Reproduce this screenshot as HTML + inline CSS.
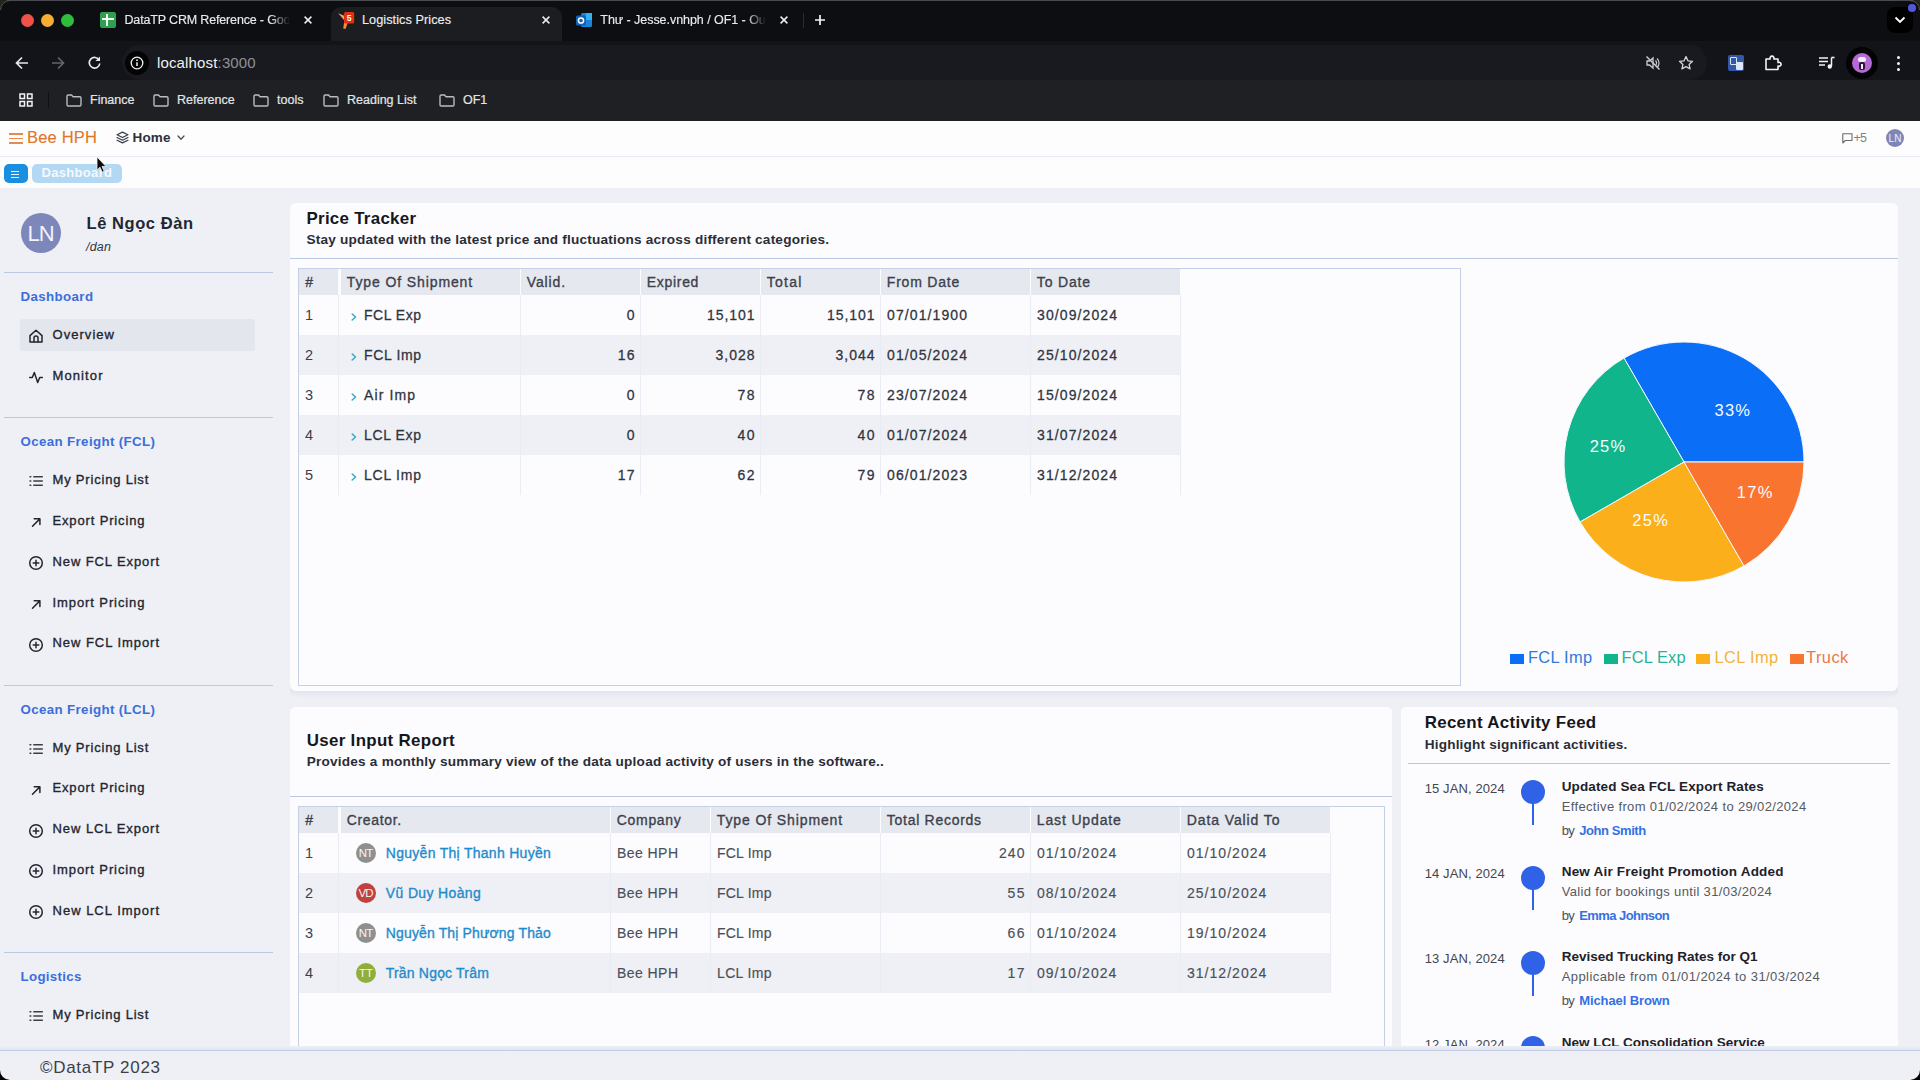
<!DOCTYPE html>
<html lang="en">
<head>
<meta charset="utf-8">
<title>Logistics Prices</title>
<style>
*{box-sizing:border-box;margin:0;padding:0}
html,body{width:1920px;height:1080px;overflow:hidden;background:#eef0f6;font-family:"Liberation Sans",sans-serif;color:#2b2f3a}
.a{position:absolute}
.t{position:absolute;white-space:nowrap;line-height:1}
.b{font-weight:700}
svg{position:absolute;overflow:visible}
/* chrome */
#tabstrip{left:0;top:0;width:1920px;height:41px;background:#0d0e12}
#toolbar{left:0;top:41px;width:1920px;height:40px;background:#131419}
#omni{left:122px;top:45px;width:1585px;height:35px;border-radius:18px;background:#191a1f}
#bmbar{left:0;top:80px;width:1920px;height:41px;background:#1f2023}
#acttab{left:331px;top:7px;width:231px;height:34px;border-radius:10px 10px 0 0;background:#1c1d20}
.ct{color:#e8eaed;font-size:13px;-webkit-text-stroke:.2px currentColor}
.bm{color:#e3e5e8;font-size:12.5px;top:94px;-webkit-text-stroke:.2px currentColor}
/* app */
#apphdr{left:0;top:121px;width:1920px;height:67px;background:#fdfdfe}
#hdrline{left:0;top:156px;width:1920px;height:1px;background:#e9ebf5}
.panel{background:#fcfcfe;border-radius:6px}
.hline{height:1px;background:#bcc9e2}
.sec{color:#3b6fd9;font-weight:700;font-size:14px}
.it{color:#23262f;font-weight:700;font-size:14px}
.ico{stroke:#23262f;fill:none;stroke-width:1.5;stroke-linecap:round;stroke-linejoin:round}
.th{color:#3a3f4a;font-weight:700;font-size:15px}
.td{color:#343843;font-size:15px}
.tdb{color:#2b2f39;font-weight:700;font-size:15px}
.hc{position:absolute;background:#e4e7ed;height:26px}
.alt{position:absolute;background:#eef0f5;height:40px}
.vsep{position:absolute;width:1px;background:#eceef3}
.lnk{color:#2089c9;font-weight:700;font-size:15px}
.av{position:absolute;width:20px;height:20px;border-radius:50%;color:#fff;font-size:11px;text-align:center;line-height:20px;letter-spacing:-0.5px}
</style>
</head>
<body>
<!-- ===== page ===== -->
<!-- ===== Price Tracker panel ===== -->
<div class="a" style="left:290px;top:203px;width:1608px;height:495px;border-radius:8px;background:linear-gradient(#e2e5ee 488px,#eef0f6 495px)"></div>
<div class="a panel" style="left:290px;top:202.500px;width:1608px;height:488.500px"></div>
<div class="t" style="left:306.50px;top:210.50px;font-size:16.9px;color:#15171c;font-weight:700;letter-spacing:0.281px">Price Tracker</div>
<div class="t" style="left:306.50px;top:232.50px;font-size:13.6px;color:#2a2d36;font-weight:700;letter-spacing:0.207px">Stay updated with the latest price and fluctuations across different categories.</div>
<div class="a hline" style="left:290px;top:258px;width:1608px"></div>
<div class="a" style="left:298px;top:268px;width:1163px;height:418px;border:1px solid #c6d0e4"></div>
<div class="hc" style="left:299px;top:269px;width:38.5px;height:26px;background:#e5e8ee"></div>
<div class="t" style="left:305.30px;top:274.70px;font-size:14px;color:#3c414c;-webkit-text-stroke:.34px currentColor">#</div>
<div class="hc" style="left:340.8px;top:269px;width:178.99999999999994px;height:26px;background:#e5e8ee"></div>
<div class="t" style="left:346.80px;top:274.70px;font-size:14px;color:#3c414c;-webkit-text-stroke:.34px currentColor;letter-spacing:0.889px">Type Of Shipment</div>
<div class="hc" style="left:521.2px;top:269px;width:118.59999999999991px;height:26px;background:#e5e8ee"></div>
<div class="t" style="left:526.80px;top:274.70px;font-size:14px;color:#3c414c;-webkit-text-stroke:.34px currentColor;letter-spacing:0.863px">Valid.</div>
<div class="hc" style="left:641.2px;top:269px;width:118.59999999999991px;height:26px;background:#e5e8ee"></div>
<div class="t" style="left:646.80px;top:274.70px;font-size:14px;color:#3c414c;-webkit-text-stroke:.34px currentColor;letter-spacing:0.689px">Expired</div>
<div class="hc" style="left:761.2px;top:269px;width:118.59999999999991px;height:26px;background:#e5e8ee"></div>
<div class="t" style="left:766.80px;top:274.70px;font-size:14px;color:#3c414c;-webkit-text-stroke:.34px currentColor;letter-spacing:1.255px">Total</div>
<div class="hc" style="left:881.2px;top:269px;width:148.5999999999999px;height:26px;background:#e5e8ee"></div>
<div class="t" style="left:886.80px;top:274.70px;font-size:14px;color:#3c414c;-webkit-text-stroke:.34px currentColor;letter-spacing:0.797px">From Date</div>
<div class="hc" style="left:1031.2px;top:269px;width:148.79999999999995px;height:26px;background:#e5e8ee"></div>
<div class="t" style="left:1036.80px;top:274.70px;font-size:14px;color:#3c414c;-webkit-text-stroke:.34px currentColor;letter-spacing:0.842px">To Date</div>
<div class="t" style="left:305.00px;top:308.00px;font-size:14.5px;color:#3b3f4a">1</div>
<svg style="left:350.7px;top:312.7px" width="6" height="8" viewBox="0 0 6 8"><path d="M1.200 1l3.300 3-3.300 3" stroke="#3ba7c6" stroke-width="1.500" fill="none" stroke-linecap="round" stroke-linejoin="round"/></svg>
<div class="t" style="left:364.00px;top:308.00px;font-size:14px;color:#30343f;-webkit-text-stroke:.27px currentColor;letter-spacing:0.508px">FCL Exp</div>
<div class="t" style="left:626.70px;top:308.00px;font-size:14px;color:#30343f;-webkit-text-stroke:.27px currentColor">0</div>
<div class="t" style="left:707.00px;top:308.00px;font-size:14px;color:#30343f;-webkit-text-stroke:.27px currentColor;letter-spacing:0.934px">15,101</div>
<div class="t" style="left:827.00px;top:308.00px;font-size:14px;color:#30343f;-webkit-text-stroke:.27px currentColor;letter-spacing:0.934px">15,101</div>
<div class="t" style="left:887.00px;top:308.00px;font-size:14px;color:#30343f;-webkit-text-stroke:.27px currentColor;letter-spacing:1.102px">07/01/1900</div>
<div class="t" style="left:1037.00px;top:308.00px;font-size:14px;color:#30343f;-webkit-text-stroke:.27px currentColor;letter-spacing:1.102px">30/09/2024</div>
<div class="alt" style="left:299px;top:335px;width:881px;height:40px;background:#eef0f5"></div>
<div class="t" style="left:305.00px;top:348.00px;font-size:14.5px;color:#3b3f4a">2</div>
<svg style="left:350.7px;top:352.7px" width="6" height="8" viewBox="0 0 6 8"><path d="M1.200 1l3.300 3-3.300 3" stroke="#3ba7c6" stroke-width="1.500" fill="none" stroke-linecap="round" stroke-linejoin="round"/></svg>
<div class="t" style="left:364.00px;top:348.00px;font-size:14px;color:#30343f;-webkit-text-stroke:.27px currentColor;letter-spacing:0.641px">FCL Imp</div>
<div class="t" style="left:617.70px;top:348.00px;font-size:14px;color:#30343f;-webkit-text-stroke:.27px currentColor;letter-spacing:1.222px">16</div>
<div class="t" style="left:715.50px;top:348.00px;font-size:14px;color:#30343f;-webkit-text-stroke:.27px currentColor;letter-spacing:0.988px">3,028</div>
<div class="t" style="left:835.50px;top:348.00px;font-size:14px;color:#30343f;-webkit-text-stroke:.27px currentColor;letter-spacing:0.988px">3,044</div>
<div class="t" style="left:887.00px;top:348.00px;font-size:14px;color:#30343f;-webkit-text-stroke:.27px currentColor;letter-spacing:1.102px">01/05/2024</div>
<div class="t" style="left:1037.00px;top:348.00px;font-size:14px;color:#30343f;-webkit-text-stroke:.27px currentColor;letter-spacing:1.102px">25/10/2024</div>
<div class="t" style="left:305.00px;top:388.00px;font-size:14.5px;color:#3b3f4a">3</div>
<svg style="left:350.7px;top:392.7px" width="6" height="8" viewBox="0 0 6 8"><path d="M1.200 1l3.300 3-3.300 3" stroke="#3ba7c6" stroke-width="1.500" fill="none" stroke-linecap="round" stroke-linejoin="round"/></svg>
<div class="t" style="left:364.00px;top:388.00px;font-size:14px;color:#30343f;-webkit-text-stroke:.27px currentColor;letter-spacing:1.109px">Air Imp</div>
<div class="t" style="left:626.70px;top:388.00px;font-size:14px;color:#30343f;-webkit-text-stroke:.27px currentColor">0</div>
<div class="t" style="left:737.50px;top:388.00px;font-size:14px;color:#30343f;-webkit-text-stroke:.27px currentColor;letter-spacing:1.422px">78</div>
<div class="t" style="left:857.50px;top:388.00px;font-size:14px;color:#30343f;-webkit-text-stroke:.27px currentColor;letter-spacing:1.422px">78</div>
<div class="t" style="left:887.00px;top:388.00px;font-size:14px;color:#30343f;-webkit-text-stroke:.27px currentColor;letter-spacing:1.102px">23/07/2024</div>
<div class="t" style="left:1037.00px;top:388.00px;font-size:14px;color:#30343f;-webkit-text-stroke:.27px currentColor;letter-spacing:1.102px">15/09/2024</div>
<div class="alt" style="left:299px;top:415px;width:881px;height:40px;background:#eef0f5"></div>
<div class="t" style="left:305.00px;top:428.00px;font-size:14.5px;color:#3b3f4a">4</div>
<svg style="left:350.7px;top:432.7px" width="6" height="8" viewBox="0 0 6 8"><path d="M1.200 1l3.300 3-3.300 3" stroke="#3ba7c6" stroke-width="1.500" fill="none" stroke-linecap="round" stroke-linejoin="round"/></svg>
<div class="t" style="left:364.00px;top:428.00px;font-size:14px;color:#30343f;-webkit-text-stroke:.27px currentColor;letter-spacing:0.635px">LCL Exp</div>
<div class="t" style="left:626.70px;top:428.00px;font-size:14px;color:#30343f;-webkit-text-stroke:.27px currentColor">0</div>
<div class="t" style="left:737.50px;top:428.00px;font-size:14px;color:#30343f;-webkit-text-stroke:.27px currentColor;letter-spacing:1.422px">40</div>
<div class="t" style="left:857.50px;top:428.00px;font-size:14px;color:#30343f;-webkit-text-stroke:.27px currentColor;letter-spacing:1.422px">40</div>
<div class="t" style="left:887.00px;top:428.00px;font-size:14px;color:#30343f;-webkit-text-stroke:.27px currentColor;letter-spacing:1.102px">01/07/2024</div>
<div class="t" style="left:1037.00px;top:428.00px;font-size:14px;color:#30343f;-webkit-text-stroke:.27px currentColor;letter-spacing:1.102px">31/07/2024</div>
<div class="t" style="left:305.00px;top:468.00px;font-size:14.5px;color:#3b3f4a">5</div>
<svg style="left:350.7px;top:472.7px" width="6" height="8" viewBox="0 0 6 8"><path d="M1.200 1l3.300 3-3.300 3" stroke="#3ba7c6" stroke-width="1.500" fill="none" stroke-linecap="round" stroke-linejoin="round"/></svg>
<div class="t" style="left:364.00px;top:468.00px;font-size:14px;color:#30343f;-webkit-text-stroke:.27px currentColor;letter-spacing:0.768px">LCL Imp</div>
<div class="t" style="left:617.70px;top:468.00px;font-size:14px;color:#30343f;-webkit-text-stroke:.27px currentColor;letter-spacing:1.222px">17</div>
<div class="t" style="left:737.50px;top:468.00px;font-size:14px;color:#30343f;-webkit-text-stroke:.27px currentColor;letter-spacing:1.422px">62</div>
<div class="t" style="left:857.50px;top:468.00px;font-size:14px;color:#30343f;-webkit-text-stroke:.27px currentColor;letter-spacing:1.422px">79</div>
<div class="t" style="left:887.00px;top:468.00px;font-size:14px;color:#30343f;-webkit-text-stroke:.27px currentColor;letter-spacing:1.102px">06/01/2023</div>
<div class="t" style="left:1037.00px;top:468.00px;font-size:14px;color:#30343f;-webkit-text-stroke:.27px currentColor;letter-spacing:1.102px">31/12/2024</div>
<div class="vsep" style="left:338.0px;top:295px;height:200px;background:#e9ecf2"></div>
<div class="vsep" style="left:520.0px;top:295px;height:200px;background:#e9ecf2"></div>
<div class="vsep" style="left:640.0px;top:295px;height:200px;background:#e9ecf2"></div>
<div class="vsep" style="left:760.0px;top:295px;height:200px;background:#e9ecf2"></div>
<div class="vsep" style="left:880.0px;top:295px;height:200px;background:#e9ecf2"></div>
<div class="vsep" style="left:1030.0px;top:295px;height:200px;background:#e9ecf2"></div>
<div class="vsep" style="left:1179.5px;top:295px;height:200px;background:#e9ecf2"></div>
<svg style="left:0;top:0" width="1920" height="1080" viewBox="0 0 1920 1080"><path d="M1684 462L1804.00 462.00A120 120 0 0 0 1624.00 358.08Z" fill="#0b6ef6" stroke="#f4f8ff" stroke-width="1"/><path d="M1684 462L1624.00 358.08A120 120 0 0 0 1580.08 522.00Z" fill="#10b58b" stroke="#f4f8ff" stroke-width="1"/><path d="M1684 462L1580.08 522.00A120 120 0 0 0 1744.00 565.92Z" fill="#fbaf1b" stroke="#f4f8ff" stroke-width="1"/><path d="M1684 462L1744.00 565.92A120 120 0 0 0 1804.00 462.00Z" fill="#f9742f" stroke="#f4f8ff" stroke-width="1"/></svg>
<div class="t" style="left:1714.55px;top:402.20px;font-size:16.5px;color:#f7fbff;letter-spacing:1.234px">33%</div>
<div class="t" style="left:1589.65px;top:438.20px;font-size:16.5px;color:#f7fbff;letter-spacing:1.234px">25%</div>
<div class="t" style="left:1632.35px;top:512.00px;font-size:16.5px;color:#f7fbff;letter-spacing:1.234px">25%</div>
<div class="t" style="left:1736.85px;top:483.80px;font-size:16.5px;color:#f7fbff;letter-spacing:1.234px">17%</div>
<div class="a" style="left:1510px;top:654px;width:14px;height:10px;background:#0b6ef6"></div>
<div class="t" style="left:1528.00px;top:649.00px;font-size:16.4px;color:#2e7bd8;letter-spacing:0.294px">FCL Imp</div>
<div class="a" style="left:1603.5px;top:654px;width:14px;height:10px;background:#10b58b"></div>
<div class="t" style="left:1621.50px;top:649.00px;font-size:16.4px;color:#27b398;letter-spacing:0.141px">FCL Exp</div>
<div class="a" style="left:1696.3px;top:654px;width:14px;height:10px;background:#fbaf1b"></div>
<div class="t" style="left:1714.60px;top:649.00px;font-size:16.4px;color:#f3b23c;letter-spacing:0.359px">LCL Imp</div>
<div class="a" style="left:1789.6px;top:654px;width:14px;height:10px;background:#f9742f"></div>
<div class="t" style="left:1806.00px;top:649.00px;font-size:16.4px;color:#e8794a;letter-spacing:0.481px">Truck</div>
<!-- ===== User Input Report panel ===== -->
<div class="a" style="left:290px;top:707px;width:1102px;height:347px;border-radius:5px 5px 0 0;background:#fcfcfe"></div>
<div class="t" style="left:306.70px;top:732.50px;font-size:16.9px;color:#15171c;font-weight:700;letter-spacing:0.335px">User Input Report</div>
<div class="t" style="left:306.70px;top:755.00px;font-size:13.6px;color:#2a2d36;font-weight:700;letter-spacing:0.221px">Provides a monthly summary view of the data upload activity of users in the software..</div>
<div class="a hline" style="left:290px;top:796px;width:1102px"></div>
<div class="a" style="left:298px;top:806px;width:1087px;height:254px;border:1px solid #c6d0e4;border-bottom:none"></div>
<div class="hc" style="left:299px;top:807px;width:38.5px;height:26px;background:#e5e8ee"></div>
<div class="t" style="left:305.30px;top:812.80px;font-size:14px;color:#3c414c;-webkit-text-stroke:.34px currentColor">#</div>
<div class="hc" style="left:340.8px;top:807px;width:268.99999999999994px;height:26px;background:#e5e8ee"></div>
<div class="t" style="left:346.80px;top:812.80px;font-size:14px;color:#3c414c;-webkit-text-stroke:.34px currentColor;letter-spacing:0.641px">Creator.</div>
<div class="hc" style="left:611.2px;top:807px;width:98.59999999999991px;height:26px;background:#e5e8ee"></div>
<div class="t" style="left:616.80px;top:812.80px;font-size:14px;color:#3c414c;-webkit-text-stroke:.34px currentColor;letter-spacing:0.680px">Company</div>
<div class="hc" style="left:711.2px;top:807px;width:168.5999999999999px;height:26px;background:#e5e8ee"></div>
<div class="t" style="left:716.80px;top:812.80px;font-size:14px;color:#3c414c;-webkit-text-stroke:.34px currentColor;letter-spacing:0.889px">Type Of Shipment</div>
<div class="hc" style="left:881.2px;top:807px;width:148.5999999999999px;height:26px;background:#e5e8ee"></div>
<div class="t" style="left:886.80px;top:812.80px;font-size:14px;color:#3c414c;-webkit-text-stroke:.34px currentColor;letter-spacing:0.726px">Total Records</div>
<div class="hc" style="left:1031.2px;top:807px;width:148.5999999999999px;height:26px;background:#e5e8ee"></div>
<div class="t" style="left:1036.80px;top:812.80px;font-size:14px;color:#3c414c;-webkit-text-stroke:.34px currentColor;letter-spacing:0.850px">Last Update</div>
<div class="hc" style="left:1181.2px;top:807px;width:148.79999999999995px;height:26px;background:#e5e8ee"></div>
<div class="t" style="left:1186.80px;top:812.80px;font-size:14px;color:#3c414c;-webkit-text-stroke:.34px currentColor;letter-spacing:0.893px">Data Valid To</div>
<div class="t" style="left:305.00px;top:845.60px;font-size:14.5px;color:#3b3f4a">1</div>
<div class="a" style="left:356.0px;top:842.9px;width:20px;height:20px;border-radius:50%;background:#8f8f8f"></div>
<div class="t" style="left:358.83px;top:848.00px;font-size:11.5px;color:#f6f6f6;letter-spacing:-1.000px">NT</div>
<div class="t" style="left:385.80px;top:845.60px;font-size:14px;color:#1f8bcb;-webkit-text-stroke:.34px currentColor;letter-spacing:0.284px">Nguyễn Thị Thanh Huyền</div>
<div class="t" style="left:617.00px;top:845.60px;font-size:14px;color:#4b4f59;-webkit-text-stroke:.15px currentColor;letter-spacing:0.440px">Bee HPH</div>
<div class="t" style="left:717.00px;top:845.60px;font-size:14px;color:#4b4f59;-webkit-text-stroke:.15px currentColor;letter-spacing:0.224px">FCL Imp</div>
<div class="t" style="left:998.90px;top:845.60px;font-size:14px;color:#4b4f59;-webkit-text-stroke:.15px currentColor;letter-spacing:1.120px">240</div>
<div class="t" style="left:1037.00px;top:845.60px;font-size:14px;color:#4b4f59;-webkit-text-stroke:.15px currentColor;letter-spacing:1.025px">01/10/2024</div>
<div class="t" style="left:1187.00px;top:845.60px;font-size:14px;color:#4b4f59;-webkit-text-stroke:.15px currentColor;letter-spacing:1.025px">01/10/2024</div>
<div class="alt" style="left:299px;top:873px;width:1031px;height:40px;background:#eef0f5"></div>
<div class="t" style="left:305.00px;top:885.60px;font-size:14.5px;color:#3b3f4a">2</div>
<div class="a" style="left:356.0px;top:882.9px;width:20px;height:20px;border-radius:50%;background:#c0413e"></div>
<div class="t" style="left:358.51px;top:888.00px;font-size:11.5px;color:#f6f6f6;letter-spacing:-1.000px">VD</div>
<div class="t" style="left:385.80px;top:885.60px;font-size:14px;color:#1f8bcb;-webkit-text-stroke:.34px currentColor;letter-spacing:0.358px">Vũ Duy Hoàng</div>
<div class="t" style="left:617.00px;top:885.60px;font-size:14px;color:#4b4f59;-webkit-text-stroke:.15px currentColor;letter-spacing:0.440px">Bee HPH</div>
<div class="t" style="left:717.00px;top:885.60px;font-size:14px;color:#4b4f59;-webkit-text-stroke:.15px currentColor;letter-spacing:0.224px">FCL Imp</div>
<div class="t" style="left:1007.42px;top:885.60px;font-size:14px;color:#4b4f59;-webkit-text-stroke:.15px currentColor;letter-spacing:1.500px">55</div>
<div class="t" style="left:1037.00px;top:885.60px;font-size:14px;color:#4b4f59;-webkit-text-stroke:.15px currentColor;letter-spacing:1.025px">08/10/2024</div>
<div class="t" style="left:1187.00px;top:885.60px;font-size:14px;color:#4b4f59;-webkit-text-stroke:.15px currentColor;letter-spacing:1.025px">25/10/2024</div>
<div class="t" style="left:305.00px;top:925.60px;font-size:14.5px;color:#3b3f4a">3</div>
<div class="a" style="left:356.0px;top:922.9px;width:20px;height:20px;border-radius:50%;background:#8f8f8f"></div>
<div class="t" style="left:358.83px;top:928.00px;font-size:11.5px;color:#f6f6f6;letter-spacing:-1.000px">NT</div>
<div class="t" style="left:385.80px;top:925.60px;font-size:14px;color:#1f8bcb;-webkit-text-stroke:.34px currentColor;letter-spacing:0.141px">Nguyễn Thị Phương Thảo</div>
<div class="t" style="left:617.00px;top:925.60px;font-size:14px;color:#4b4f59;-webkit-text-stroke:.15px currentColor;letter-spacing:0.440px">Bee HPH</div>
<div class="t" style="left:717.00px;top:925.60px;font-size:14px;color:#4b4f59;-webkit-text-stroke:.15px currentColor;letter-spacing:0.224px">FCL Imp</div>
<div class="t" style="left:1007.42px;top:925.60px;font-size:14px;color:#4b4f59;-webkit-text-stroke:.15px currentColor;letter-spacing:1.500px">66</div>
<div class="t" style="left:1037.00px;top:925.60px;font-size:14px;color:#4b4f59;-webkit-text-stroke:.15px currentColor;letter-spacing:1.025px">01/10/2024</div>
<div class="t" style="left:1187.00px;top:925.60px;font-size:14px;color:#4b4f59;-webkit-text-stroke:.15px currentColor;letter-spacing:1.025px">19/10/2024</div>
<div class="alt" style="left:299px;top:953px;width:1031px;height:40px;background:#eef0f5"></div>
<div class="t" style="left:305.00px;top:965.60px;font-size:14.5px;color:#3b3f4a">4</div>
<div class="a" style="left:356.0px;top:962.9px;width:20px;height:20px;border-radius:50%;background:#8fae3a"></div>
<div class="t" style="left:359.00px;top:968.00px;font-size:11.5px;color:#f6f6f6;letter-spacing:-0.062px">TT</div>
<div class="t" style="left:385.80px;top:965.60px;font-size:14px;color:#1f8bcb;-webkit-text-stroke:.34px currentColor;letter-spacing:0.183px">Trần Ngọc Trâm</div>
<div class="t" style="left:617.00px;top:965.60px;font-size:14px;color:#4b4f59;-webkit-text-stroke:.15px currentColor;letter-spacing:0.440px">Bee HPH</div>
<div class="t" style="left:717.00px;top:965.60px;font-size:14px;color:#4b4f59;-webkit-text-stroke:.15px currentColor;letter-spacing:0.352px">LCL Imp</div>
<div class="t" style="left:1007.42px;top:965.60px;font-size:14px;color:#4b4f59;-webkit-text-stroke:.15px currentColor;letter-spacing:1.500px">17</div>
<div class="t" style="left:1037.00px;top:965.60px;font-size:14px;color:#4b4f59;-webkit-text-stroke:.15px currentColor;letter-spacing:1.025px">09/10/2024</div>
<div class="t" style="left:1187.00px;top:965.60px;font-size:14px;color:#4b4f59;-webkit-text-stroke:.15px currentColor;letter-spacing:1.025px">31/12/2024</div>
<div class="vsep" style="left:338.0px;top:833px;height:160px;background:#e9ecf2"></div>
<div class="vsep" style="left:610.0px;top:833px;height:160px;background:#e9ecf2"></div>
<div class="vsep" style="left:710.0px;top:833px;height:160px;background:#e9ecf2"></div>
<div class="vsep" style="left:880.0px;top:833px;height:160px;background:#e9ecf2"></div>
<div class="vsep" style="left:1030.0px;top:833px;height:160px;background:#e9ecf2"></div>
<div class="vsep" style="left:1180.0px;top:833px;height:160px;background:#e9ecf2"></div>
<div class="vsep" style="left:1329.5px;top:833px;height:160px;background:#e9ecf2"></div>
<!-- ===== Recent Activity Feed panel ===== -->
<div class="a" style="left:1400px;top:708px;width:1497px;height:0"></div>
<div class="a" style="left:1400.500px;top:707px;width:497.500px;height:347px;border-radius:5px 5px 0 0;background:#fcfcfe"></div>
<div class="t" style="left:1424.70px;top:715.30px;font-size:16.9px;color:#15171c;font-weight:700;letter-spacing:0.314px">Recent Activity Feed</div>
<div class="t" style="left:1424.70px;top:737.80px;font-size:13.6px;color:#2a2d36;font-weight:700;letter-spacing:0.191px">Highlight significant activities.</div>
<div class="a" style="left:1408px;top:763px;width:482px;height:1px;background:#c8c6b4"></div>
<div class="t" style="left:1424.70px;top:781.80px;font-size:13px;color:#42454e;letter-spacing:0.111px">15 JAN, 2024</div>
<div class="a" style="left:1532px;top:800.0px;width:2px;height:25px;background:#2f62e6"></div>
<div class="a" style="left:1521px;top:780.2px;width:24px;height:24px;border-radius:50%;background:#2f62e6"></div>
<div class="t" style="left:1561.70px;top:779.80px;font-size:13.5px;color:#1e2129;font-weight:700;letter-spacing:0.128px">Updated Sea FCL Export Rates</div>
<div class="t" style="left:1561.70px;top:799.80px;font-size:13px;color:#555962;letter-spacing:0.354px">Effective from 01/02/2024 to 29/02/2024</div>
<div class="t" style="left:1561.70px;top:823.70px;font-size:13px;color:#4b4f59;letter-spacing:-0.734px">by</div>
<div class="t" style="left:1579.20px;top:823.70px;font-size:13px;color:#3570e2;font-weight:700;letter-spacing:-0.420px">John Smith</div>
<div class="t" style="left:1424.70px;top:867.13px;font-size:13px;color:#42454e;letter-spacing:0.111px">14 JAN, 2024</div>
<div class="a" style="left:1532px;top:885.3px;width:2px;height:25px;background:#2f62e6"></div>
<div class="a" style="left:1521px;top:865.5px;width:24px;height:24px;border-radius:50%;background:#2f62e6"></div>
<div class="t" style="left:1561.70px;top:865.13px;font-size:13.5px;color:#1e2129;font-weight:700;letter-spacing:0.202px">New Air Freight Promotion Added</div>
<div class="t" style="left:1561.70px;top:885.13px;font-size:13px;color:#555962;letter-spacing:0.338px">Valid for bookings until 31/03/2024</div>
<div class="t" style="left:1561.70px;top:909.03px;font-size:13px;color:#4b4f59;letter-spacing:-0.734px">by</div>
<div class="t" style="left:1579.20px;top:909.03px;font-size:13px;color:#3570e2;font-weight:700;letter-spacing:-0.563px">Emma Johnson</div>
<div class="t" style="left:1424.70px;top:952.46px;font-size:13px;color:#42454e;letter-spacing:0.111px">13 JAN, 2024</div>
<div class="a" style="left:1532px;top:970.7px;width:2px;height:25px;background:#2f62e6"></div>
<div class="a" style="left:1521px;top:950.9px;width:24px;height:24px;border-radius:50%;background:#2f62e6"></div>
<div class="t" style="left:1561.70px;top:950.46px;font-size:13.5px;color:#1e2129;font-weight:700">Revised Trucking Rates for Q1</div>
<div class="t" style="left:1561.70px;top:970.46px;font-size:13px;color:#555962;letter-spacing:0.425px">Applicable from 01/01/2024 to 31/03/2024</div>
<div class="t" style="left:1561.70px;top:994.36px;font-size:13px;color:#4b4f59;letter-spacing:-0.734px">by</div>
<div class="t" style="left:1579.20px;top:994.36px;font-size:13px;color:#3570e2;font-weight:700;letter-spacing:-0.096px">Michael Brown</div>
<div class="t" style="left:1424.70px;top:1037.79px;font-size:13px;color:#42454e;letter-spacing:0.111px">12 JAN, 2024</div>
<div class="a" style="left:1532px;top:1056.0px;width:2px;height:25px;background:#2f62e6"></div>
<div class="a" style="left:1521px;top:1036.2px;width:24px;height:24px;border-radius:50%;background:#2f62e6"></div>
<div class="t" style="left:1561.70px;top:1035.79px;font-size:13.5px;color:#1e2129;font-weight:700">New LCL Consolidation Service</div>
<!-- ===== app header ===== -->
<div class="a" id="apphdr"></div><div class="a" id="hdrline"></div>
<div class="a" style="left:9px;top:133px;width:14px;height:1.5px;background:#e58a52"></div>
<div class="a" style="left:9px;top:137.5px;width:14px;height:1.5px;background:#e58a52"></div>
<div class="a" style="left:9px;top:142px;width:14px;height:1.5px;background:#e58a52"></div>
<div class="t" style="left:27.00px;top:129.00px;font-size:16.5px;color:#e0762b;-webkit-text-stroke:.15px currentColor;letter-spacing:0.203px">Bee HPH</div>
<svg style="left:116px;top:131px" width="13" height="13" viewBox="0 0 24 24"><path d="M12 2L2 7l10 5 10-5-10-5zM2 17l10 5 10-5M2 12l10 5 10-5" stroke="#3a3f4c" stroke-width="2.4" fill="none" stroke-linejoin="round" stroke-linecap="round"/></svg>
<div class="t" style="left:132.50px;top:131.00px;font-size:13.5px;color:#2c303c;font-weight:700;letter-spacing:0.161px">Home</div>
<svg style="left:177px;top:135px" width="8" height="6" viewBox="0 0 8 6"><path d="M1 1l3 3.200L7 1" stroke="#4a4f5c" stroke-width="1.3" fill="none" stroke-linecap="round" stroke-linejoin="round"/></svg>
<svg style="left:1842px;top:133px" width="11" height="11" viewBox="0 0 11 11"><path d="M.800.800h9.200v6.700H3.300L.800 10z" stroke="#6a6a66" stroke-width="1.100" fill="none" stroke-linejoin="round"/></svg>
<div class="t" style="left:1853.50px;top:131.80px;font-size:12.5px;color:#7c7f87;letter-spacing:-0.766px">+5</div>
<div class="a" style="left:1886px;top:129px;width:18px;height:18px;border-radius:50%;background:#7d86b6"></div>
<div class="t" style="left:1888.60px;top:134.00px;font-size:10px;color:#eef0fa">LN</div>
<div class="a" style="left:4px;top:164px;width:24px;height:19px;border-radius:5px;background:#1a8fe2"></div>
<div class="a" style="left:10.500px;top:170.5px;width:8px;height:1.200px;background:#eaf5ff"></div>
<div class="a" style="left:10.500px;top:173.5px;width:8px;height:1.200px;background:#eaf5ff"></div>
<div class="a" style="left:10.500px;top:176.5px;width:8px;height:1.200px;background:#eaf5ff"></div>
<div class="a" style="left:32px;top:164px;width:90px;height:19px;border-radius:5px;background:#b3d8f3"></div>
<div class="t" style="left:41.50px;top:166.00px;font-size:13px;color:#f4faff;font-weight:700;letter-spacing:0.324px">Dashboard</div>
<svg style="left:96px;top:156px" width="12" height="18" viewBox="0 0 12 18"><path d="M1 1v13l3-2.800 2.200 5 2-.900-2.200-4.900H10z" fill="#0a0a0c" stroke="#f4f4f4" stroke-width=".8" stroke-linejoin="round"/></svg>
<!-- ===== sidebar ===== -->
<div class="a" style="left:21px;top:213px;width:40px;height:40px;border-radius:50%;background:#7d87b9"></div>
<div class="t" style="left:27.44px;top:223.30px;font-size:22px;color:#f2f3fb;letter-spacing:-1.000px">LN</div>
<div class="t" style="left:86.50px;top:214.70px;font-size:16.5px;color:#23262f;font-weight:700;letter-spacing:0.564px">Lê Ngọc Đàn</div>
<div class="t" style="left:86.00px;top:240.50px;font-size:12.5px;color:#33363f;font-style:italic;letter-spacing:0.219px">/dan</div>
<div class="a hline" style="left:4px;top:272px;width:269px"></div>
<div class="t" style="left:20.50px;top:290.30px;font-size:13.3px;color:#3a6fdb;font-weight:700;letter-spacing:0.381px">Dashboard</div>
<div class="a" style="left:20px;top:319px;width:235px;height:32px;border-radius:3px;background:#e3e6ed"></div>
<svg class="ico" style="left:29px;top:329.0px" width="14" height="14" viewBox="0 0 14 14"><path d="M1 6.600L7 1.200l6 5.400V13H1z"/><path d="M5 13V9a2 2 0 0 1 4 0v4"/></svg>
<div class="t" style="left:52.50px;top:327.50px;font-size:13px;color:#22252e;-webkit-text-stroke:.34px currentColor;letter-spacing:1.045px">Overview</div>
<svg class="ico" style="left:29px;top:370.0px" width="14" height="14" viewBox="0 0 14 14"><path d="M.700 7.500h2.600l2-5 3.400 10 2-5h2.600"/></svg>
<div class="t" style="left:52.50px;top:368.50px;font-size:13px;color:#22252e;-webkit-text-stroke:.34px currentColor;letter-spacing:1.107px">Monitor</div>
<div class="a hline" style="left:4px;top:417px;width:269px"></div>
<div class="t" style="left:20.50px;top:434.60px;font-size:13.3px;color:#3a6fdb;font-weight:700;letter-spacing:0.372px">Ocean Freight (FCL)</div>
<svg class="ico" style="left:29px;top:473.90000000000003px" width="14" height="14" viewBox="0 0 14 14"><path d="M4.800 2.800H13.300M4.800 7H13.300M4.800 11.200H13.300" stroke="#3d3f45"/><path d="M1 2.800h.800M1 7h.800M1 11.200h.800" stroke="#3d3f45"/></svg>
<div class="t" style="left:52.50px;top:472.80px;font-size:13px;color:#22252e;-webkit-text-stroke:.34px currentColor;letter-spacing:0.805px">My Pricing List</div>
<svg class="ico" style="left:29px;top:515.2px" width="14" height="14" viewBox="0 0 14 14"><path d="M3.500 11.200L10.600 4.100M5.200 3.800H10.900V9.500"/></svg>
<div class="t" style="left:52.50px;top:513.70px;font-size:13px;color:#22252e;-webkit-text-stroke:.34px currentColor;letter-spacing:0.852px">Export Pricing</div>
<svg class="ico" style="left:29px;top:556.1px" width="14" height="14" viewBox="0 0 14 14"><circle cx="7" cy="7" r="6.300"/><path d="M7 4.200v5.600M4.200 7h5.600"/></svg>
<div class="t" style="left:52.50px;top:554.60px;font-size:13px;color:#22252e;-webkit-text-stroke:.34px currentColor;letter-spacing:0.893px">New FCL Export</div>
<svg class="ico" style="left:29px;top:597.0px" width="14" height="14" viewBox="0 0 14 14"><path d="M3.500 11.200L10.600 4.100M5.200 3.800H10.900V9.500"/></svg>
<div class="t" style="left:52.50px;top:595.50px;font-size:13px;color:#22252e;-webkit-text-stroke:.34px currentColor;letter-spacing:0.907px">Import Pricing</div>
<svg class="ico" style="left:29px;top:637.9px" width="14" height="14" viewBox="0 0 14 14"><circle cx="7" cy="7" r="6.300"/><path d="M7 4.200v5.600M4.200 7h5.600"/></svg>
<div class="t" style="left:52.50px;top:636.40px;font-size:13px;color:#22252e;-webkit-text-stroke:.34px currentColor;letter-spacing:0.950px">New FCL Import</div>
<div class="a hline" style="left:4px;top:685px;width:269px"></div>
<div class="t" style="left:20.50px;top:703.00px;font-size:13.3px;color:#3a6fdb;font-weight:700;letter-spacing:0.372px">Ocean Freight (LCL)</div>
<svg class="ico" style="left:29px;top:741.8000000000001px" width="14" height="14" viewBox="0 0 14 14"><path d="M4.800 2.800H13.300M4.800 7H13.300M4.800 11.200H13.300" stroke="#3d3f45"/><path d="M1 2.800h.800M1 7h.800M1 11.200h.800" stroke="#3d3f45"/></svg>
<div class="t" style="left:52.50px;top:740.70px;font-size:13px;color:#22252e;-webkit-text-stroke:.34px currentColor;letter-spacing:0.805px">My Pricing List</div>
<svg class="ico" style="left:29px;top:782.95px" width="14" height="14" viewBox="0 0 14 14"><path d="M3.500 11.200L10.600 4.100M5.200 3.800H10.900V9.500"/></svg>
<div class="t" style="left:52.50px;top:781.45px;font-size:13px;color:#22252e;-webkit-text-stroke:.34px currentColor;letter-spacing:0.852px">Export Pricing</div>
<svg class="ico" style="left:29px;top:823.7px" width="14" height="14" viewBox="0 0 14 14"><circle cx="7" cy="7" r="6.300"/><path d="M7 4.200v5.600M4.200 7h5.600"/></svg>
<div class="t" style="left:52.50px;top:822.20px;font-size:13px;color:#22252e;-webkit-text-stroke:.34px currentColor;letter-spacing:0.948px">New LCL Export</div>
<svg class="ico" style="left:29px;top:864.45px" width="14" height="14" viewBox="0 0 14 14"><circle cx="7" cy="7" r="6.300"/><path d="M7 4.200v5.600M4.200 7h5.600"/></svg>
<div class="t" style="left:52.50px;top:862.95px;font-size:13px;color:#22252e;-webkit-text-stroke:.34px currentColor;letter-spacing:0.907px">Import Pricing</div>
<svg class="ico" style="left:29px;top:905.2px" width="14" height="14" viewBox="0 0 14 14"><circle cx="7" cy="7" r="6.300"/><path d="M7 4.200v5.600M4.200 7h5.600"/></svg>
<div class="t" style="left:52.50px;top:903.70px;font-size:13px;color:#22252e;-webkit-text-stroke:.34px currentColor;letter-spacing:1.005px">New LCL Import</div>
<div class="a hline" style="left:4px;top:952px;width:269px"></div>
<div class="t" style="left:20.50px;top:970.10px;font-size:13.3px;color:#3a6fdb;font-weight:700;letter-spacing:0.328px">Logistics</div>
<svg class="ico" style="left:29px;top:1008.8000000000001px" width="14" height="14" viewBox="0 0 14 14"><path d="M4.800 2.800H13.300M4.800 7H13.300M4.800 11.200H13.300" stroke="#3d3f45"/><path d="M1 2.800h.800M1 7h.800M1 11.200h.800" stroke="#3d3f45"/></svg>
<div class="t" style="left:52.50px;top:1007.70px;font-size:13px;color:#22252e;-webkit-text-stroke:.34px currentColor;letter-spacing:0.805px">My Pricing List</div>
<div class="a" style="left:0;top:1046px;width:1920px;height:34px;background:#eef0f6"></div>
<div class="a" style="left:0;top:1046px;width:1920px;height:4px;background:linear-gradient(#eef0f6,#e1e5f0)"></div>
<div class="a" style="left:0;top:1050px;width:1920px;height:1px;background:#c3cce4"></div>
<div class="t" style="left:40.00px;top:1058.50px;font-size:17px;color:#3c3f48;letter-spacing:0.690px">©DataTP 2023</div>
<!-- ===== browser chrome ===== -->
<div class="a" id="tabstrip"></div>
<div class="a" id="toolbar"></div>
<div class="a" id="omni"></div>
<div class="a" id="bmbar"></div>
<div class="a" id="acttab"></div>
<div class="a" style="left:0;top:0;width:1920px;height:1px;background:#4a4b50"></div>
<!-- traffic lights -->
<div class="a" style="left:21px;top:14px;width:13px;height:13px;border-radius:50%;background:#f0524a"></div>
<div class="a" style="left:41px;top:14px;width:13px;height:13px;border-radius:50%;background:#f5ae32"></div>
<div class="a" style="left:61px;top:14px;width:13px;height:13px;border-radius:50%;background:#2fbe3c"></div>
<!-- tab 1 -->
<div class="a" style="left:100px;top:12px;width:16px;height:16px;border-radius:2px;background:#2ea04f"></div>
<div class="a" style="left:106px;top:14px;width:2px;height:12px;background:#f2fff4"></div>
<div class="a" style="left:102px;top:18px;width:12px;height:2px;background:#f2fff4"></div>
<svg style="left:304px;top:16px" width="8" height="8" viewBox="0 0 8 8"><path d="M.600 .600L7.400 7.400M7.400 .600L.600 7.400" stroke="#eceef1" stroke-width="1.500"/></svg>
<!-- tab 2 (active) -->
<svg style="left:337px;top:11px" width="19" height="19" viewBox="0 0 19 19"><path d="M1.200 2.200l6 2.500v4.500z" fill="#f0a368"/><path d="M7.200 11l3.500 1-2.200 6-2.300-.500z" fill="#f08a3c"/><rect x="7" y="1" width="10.200" height="11.500" rx="1.500" fill="#e3300f"/><text x="12.100" y="9.700" font-size="8.500" font-weight="700" fill="#fff" text-anchor="middle" font-family="Liberation Sans">5</text></svg>
<svg style="left:542px;top:16px" width="8" height="8" viewBox="0 0 8 8"><path d="M.600 .600L7.400 7.400M7.400 .600L.600 7.400" stroke="#eceef1" stroke-width="1.500"/></svg>
<!-- tab 3 -->
<svg style="left:576px;top:12px" width="17" height="16" viewBox="0 0 17 16"><rect x="5" y="1" width="11" height="14" rx="1.5" fill="#1a86d8"/><rect x="10" y="1" width="6" height="7" fill="#35b0f0"/><rect x="0" y="3.5" width="10" height="10" rx="1.5" fill="#0f62b5"/><circle cx="5" cy="8.5" r="2.6" fill="none" stroke="#fff" stroke-width="1.5"/></svg>
<svg style="left:780px;top:16px" width="8" height="8" viewBox="0 0 8 8"><path d="M.600 .600L7.400 7.400M7.400 .600L.600 7.400" stroke="#eceef1" stroke-width="1.500"/></svg>
<div class="a" style="left:803px;top:13px;width:1px;height:15px;background:#2a2b30"></div>
<svg style="left:814px;top:14px" width="12" height="12" viewBox="0 0 12 12"><path d="M6 1V11M1 6H11" stroke="#f1f3f4" stroke-width="1.7"/></svg>
<!-- tab-search button -->
<div class="a" style="left:1887px;top:7px;width:26px;height:26px;border-radius:8px;background:#000"></div>
<svg style="left:1894px;top:16px" width="12" height="8" viewBox="0 0 12 8"><path d="M1.5 1.5L6 6l4.5-4.5" stroke="#fff" stroke-width="1.8" fill="none"/></svg>
<div class="a" style="left:1908px;top:4px;width:8px;height:8px;border-radius:50%;background:#5257e0"></div>
<!-- toolbar -->
<svg style="left:15px;top:56px" width="14" height="14" viewBox="0 0 14 14"><path d="M13 7H2M7 1.5L1.5 7 7 12.5" stroke="#e8eaed" stroke-width="1.7" fill="none"/></svg>
<svg style="left:51px;top:56px" width="14" height="14" viewBox="0 0 14 14"><path d="M1 7H12M7 1.5L12.5 7 7 12.5" stroke="#62656b" stroke-width="1.7" fill="none"/></svg>
<svg style="left:87px;top:55px" width="15" height="15" viewBox="0 0 15 15"><path d="M12.2 5.2A5.3 5.3 0 1 0 12.8 8.5" stroke="#e8eaed" stroke-width="1.7" fill="none"/><path d="M13 1.5V6H8.5z" fill="#e8eaed"/></svg>
<div class="a" style="left:125px;top:51px;width:24px;height:24px;border-radius:50%;background:#040405"></div>
<svg style="left:130px;top:56px" width="14" height="14" viewBox="0 0 14 14"><circle cx="7" cy="7" r="5.8" stroke="#f1f3f4" stroke-width="1.3" fill="none"/><path d="M7 6.3V10" stroke="#f1f3f4" stroke-width="1.5"/><circle cx="7" cy="4.2" r=".9" fill="#f1f3f4"/></svg>
<div class="t" style="left:157px;top:55px;font-size:15px;letter-spacing:.15px;color:#eef0f2">localhost<span style="color:#8e9197">:3000</span></div>
<!-- toolbar right icons -->
<svg style="left:1645px;top:55px" width="16" height="16" viewBox="0 0 16 16"><path d="M2 6h2.5L8 3v10L4.500 10H2z" stroke="#c9ccd1" stroke-width="1.3" fill="none"/><path d="M10.500 5.500a3.500 3.500 0 0 1 0 5M12 3.500a6 6 0 0 1 0 9" stroke="#c9ccd1" stroke-width="1.2" fill="none"/><path d="M1.500 1.500L14.500 14.500" stroke="#c9ccd1" stroke-width="1.4"/></svg>
<svg style="left:1678px;top:55px" width="16" height="16" viewBox="0 0 16 16"><path d="M8 1.600l1.950 4.200 4.550.5-3.400 3.100.95 4.500L8 11.600l-4.050 2.300.95-4.500-3.400-3.100 4.550-.5z" stroke="#d4d6da" stroke-width="1.3" fill="none" stroke-linejoin="round"/></svg>
<div class="a" style="left:1728px;top:55px;width:16px;height:16px;border-radius:2px;background:#3458a8"></div>
<div class="a" style="left:1730px;top:57px;width:7px;height:8px;border:1px solid #dfe6f5;border-radius:1px"></div>
<div class="a" style="left:1736px;top:62px;width:7px;height:8px;background:#dfe6f5;border-radius:1px"></div>
<svg style="left:1764px;top:55px" width="17" height="16" viewBox="0 0 17 16"><path d="M2 4h4.200a2 2 0 1 1 3.600 0H14v3.600a2 2 0 1 1 0 3.400V14.500H2z" stroke="#f1f3f4" stroke-width="1.6" fill="none" stroke-linejoin="round"/></svg>
<svg style="left:1818px;top:56px" width="17" height="14" viewBox="0 0 17 14"><path d="M1 2h9M1 5.500h9M1 9h6" stroke="#f1f3f4" stroke-width="1.5"/><path d="M13.500 1.500v8.500" stroke="#f1f3f4" stroke-width="1.5"/><path d="M13.500 1.500h3" stroke="#f1f3f4" stroke-width="1.6"/><circle cx="11.800" cy="10.500" r="2.200" fill="#f1f3f4"/></svg>
<div class="a" style="left:1846px;top:47px;width:32px;height:32px;border-radius:50%;background:#030304"></div>
<div class="a" style="left:1852px;top:53px;width:20px;height:20px;border-radius:50%;background:#b46ad6"></div>
<div class="a" style="left:1858px;top:57px;width:8px;height:5px;border-radius:3px;background:#f3e9f7"></div>
<div class="a" style="left:1859px;top:62px;width:6px;height:8px;border-radius:2px;background:#2a1a33"></div>
<div class="a" style="left:1861px;top:64px;width:2px;height:5px;background:#f3e9f7"></div>
<div class="a" style="left:1897px;top:56px;width:3px;height:3px;border-radius:50%;background:#f1f3f4"></div>
<div class="a" style="left:1897px;top:62px;width:3px;height:3px;border-radius:50%;background:#f1f3f4"></div>
<div class="a" style="left:1897px;top:68px;width:3px;height:3px;border-radius:50%;background:#f1f3f4"></div>
<!-- bookmarks bar -->
<svg style="left:19px;top:93px" width="14" height="14" viewBox="0 0 14 14"><path d="M1 1h4.500v4.500H1zM8.500 1H13v4.500H8.500zM1 8.500h4.500V13H1zM8.500 8.500H13V13H8.500z" stroke="#f1f3f4" stroke-width="1.5" fill="none"/></svg>
<div class="a" style="left:48px;top:92px;width:1px;height:16px;background:#101114"></div>
<div class="t" style="left:124.50px;top:13.80px;font-size:12.5px;color:#e8eaed;-webkit-text-stroke:.15px currentColor;letter-spacing:-0.159px;-webkit-mask-image:linear-gradient(90deg,#000 88%,transparent);mask-image:linear-gradient(90deg,#000 88%,transparent)">DataTP CRM Reference - Goo</div>
<div class="t" style="left:362.00px;top:13.80px;font-size:12.7px;color:#eceef1;-webkit-text-stroke:.15px currentColor;letter-spacing:0.057px">Logistics Prices</div>
<div class="t" style="left:600.30px;top:13.80px;font-size:12.5px;color:#e8eaed;-webkit-text-stroke:.15px currentColor;letter-spacing:-0.047px;-webkit-mask-image:linear-gradient(90deg,#000 88%,transparent);mask-image:linear-gradient(90deg,#000 88%,transparent)">Thư - Jesse.vnhph / OF1 - Ou</div>
<svg style="left:66px;top:94px" width="16" height="13" viewBox="0 0 16 13"><path d="M1 2.200a1.200 1.200 0 0 1 1.200-1.200h3.300l1.600 1.700h6.700a1.200 1.200 0 0 1 1.200 1.200v6.900a1.200 1.200 0 0 1-1.200 1.200H2.200A1.200 1.200 0 0 1 1 10.800z" stroke="#b9bcc1" stroke-width="1.4" fill="none"/></svg>
<div class="t bm" style="left:90px">Finance</div>
<svg style="left:153px;top:94px" width="16" height="13" viewBox="0 0 16 13"><path d="M1 2.200a1.200 1.200 0 0 1 1.200-1.200h3.300l1.600 1.700h6.700a1.200 1.200 0 0 1 1.200 1.200v6.900a1.200 1.200 0 0 1-1.200 1.200H2.200A1.200 1.200 0 0 1 1 10.800z" stroke="#b9bcc1" stroke-width="1.4" fill="none"/></svg>
<div class="t bm" style="left:177px">Reference</div>
<svg style="left:253px;top:94px" width="16" height="13" viewBox="0 0 16 13"><path d="M1 2.200a1.200 1.200 0 0 1 1.200-1.200h3.300l1.600 1.700h6.700a1.200 1.200 0 0 1 1.200 1.200v6.900a1.200 1.200 0 0 1-1.200 1.200H2.200A1.200 1.200 0 0 1 1 10.800z" stroke="#b9bcc1" stroke-width="1.4" fill="none"/></svg>
<div class="t bm" style="left:277px">tools</div>
<svg style="left:323px;top:94px" width="16" height="13" viewBox="0 0 16 13"><path d="M1 2.200a1.200 1.200 0 0 1 1.200-1.200h3.300l1.600 1.700h6.700a1.200 1.200 0 0 1 1.200 1.200v6.900a1.200 1.200 0 0 1-1.200 1.200H2.200A1.200 1.200 0 0 1 1 10.800z" stroke="#b9bcc1" stroke-width="1.4" fill="none"/></svg>
<div class="t bm" style="left:347px">Reading List</div>
<svg style="left:439px;top:94px" width="16" height="13" viewBox="0 0 16 13"><path d="M1 2.200a1.200 1.200 0 0 1 1.200-1.200h3.300l1.600 1.700h6.700a1.200 1.200 0 0 1 1.200 1.200v6.900a1.200 1.200 0 0 1-1.200 1.200H2.200A1.200 1.200 0 0 1 1 10.800z" stroke="#b9bcc1" stroke-width="1.4" fill="none"/></svg>
<div class="t bm" style="left:463px">OF1</div>
<svg style="left:0;top:1070px" width="10" height="10" viewBox="0 0 10 10"><path d="M0 0V10H10A10 10 0 0 1 0 0Z" fill="#000"/></svg>
<svg style="left:1910px;top:1070px" width="10" height="10" viewBox="0 0 10 10"><path d="M10 0V10H0A10 10 0 0 0 10 0Z" fill="#000"/></svg>
<svg style="left:0;top:0" width="10" height="10" viewBox="0 0 10 10"><path d="M0 10V0H10A10 10 0 0 0 0 10Z" fill="#23241c"/><path d="M.5 10A9.500 9.500 0 0 1 10 .5" stroke="#55565a" stroke-width="1" fill="none"/></svg>
<svg style="left:1910px;top:0" width="10" height="10" viewBox="0 0 10 10"><path d="M10 10V0H0A10 10 0 0 1 10 10Z" fill="#23241c"/><path d="M9.500 10A9.500 9.500 0 0 0 0 .5" stroke="#55565a" stroke-width="1" fill="none"/></svg>
</body>
</html>
